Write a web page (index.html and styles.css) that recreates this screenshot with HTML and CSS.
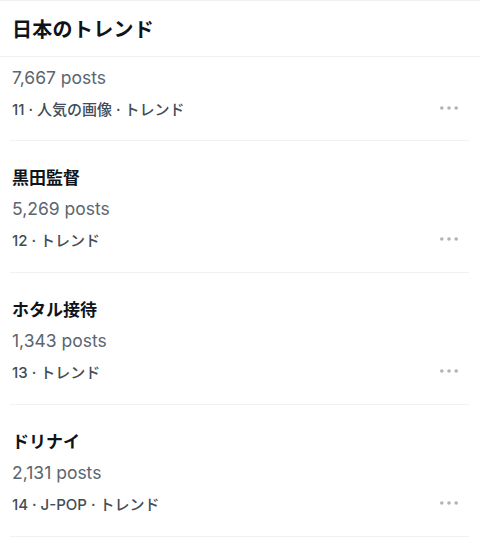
FILE: index.html
```html
<!DOCTYPE html>
<html lang="ja">
<head>
    <meta charset="UTF-8">
    <meta name="viewport" content="width=device-width, initial-scale=1.0">
    <title>日本のトレンド</title>
    <link rel="stylesheet" href="styles.css">
</head>
<body>

    <header class="header">
        <h1>日本のトレンド</h1>
    </header>

    <div class="trend-list">
        <!-- 上にスクロールして見出しが隠れている項目 -->
        <div class="trend-item cut">
            <div class="posts">7,667 posts</div>
            <div class="meta">
                <span>11 · 人気の画像 · トレンド</span>
                <svg class="more" width="18" height="4" viewBox="0 0 18 4"><circle cx="1.8" cy="2" r="1.8"/><circle cx="9" cy="2" r="1.8"/><circle cx="16.2" cy="2" r="1.8"/></svg>
            </div>
        </div>

        <div class="trend-item">
            <div class="name">黒田監督</div>
            <div class="posts">5,269 posts</div>
            <div class="meta">
                <span>12 · トレンド</span>
                <svg class="more" width="18" height="4" viewBox="0 0 18 4"><circle cx="1.8" cy="2" r="1.8"/><circle cx="9" cy="2" r="1.8"/><circle cx="16.2" cy="2" r="1.8"/></svg>
            </div>
        </div>

        <div class="trend-item">
            <div class="name">ホタル接待</div>
            <div class="posts">1,343 posts</div>
            <div class="meta">
                <span>13 · トレンド</span>
                <svg class="more" width="18" height="4" viewBox="0 0 18 4"><circle cx="1.8" cy="2" r="1.8"/><circle cx="9" cy="2" r="1.8"/><circle cx="16.2" cy="2" r="1.8"/></svg>
            </div>
        </div>

        <div class="trend-item">
            <div class="name">ドリナイ</div>
            <div class="posts">2,131 posts</div>
            <div class="meta">
                <span>14 · J-POP · トレンド</span>
                <svg class="more" width="18" height="4" viewBox="0 0 18 4"><circle cx="1.8" cy="2" r="1.8"/><circle cx="9" cy="2" r="1.8"/><circle cx="16.2" cy="2" r="1.8"/></svg>
            </div>
        </div>
    </div>

</body>
</html>
```

FILE: styles.css
```css
/* Reset */
* {
    margin: 0;
    padding: 0;
    box-sizing: border-box;
}

body {
    font-family: "Inter", "Noto Sans CJK JP", sans-serif;
    background-color: #fff;
    color: #0f1419;
}

/* Cabeçalho */
.header {
    height: 57px;
    border-top: 1px solid #eff3f4;
    border-bottom: 1px solid #eff3f4;
    display: flex;
    align-items: center;
    padding-left: 12px;
}

.header h1 {
    font-size: 20px;
    font-weight: 700;
    line-height: 26px;
    margin-top: 2px;
    letter-spacing: 0.3px;
}

/* Lista */
.trend-list {
    padding: 0 11px 0 10px;
}

.trend-item {
    height: 132px;
    padding: 22px 0 0 2px;
    border-bottom: 1px solid #eff3f4;
}

.trend-item.cut {
    height: 84px;
    padding-top: 5px;
}

.name {
    font-size: 17px;
    font-weight: 700;
    line-height: 30px;
}

.posts {
    font-size: 17.5px;
    line-height: 31px;
    color: #5b6670;
}

.meta {
    display: flex;
    justify-content: space-between;
    align-items: center;
    height: 30px;
    font-size: 15px;
    font-weight: 500;
    color: #424d57;
}

.more {
    fill: #aeb4ba;
    margin-right: 11px;
}
```
